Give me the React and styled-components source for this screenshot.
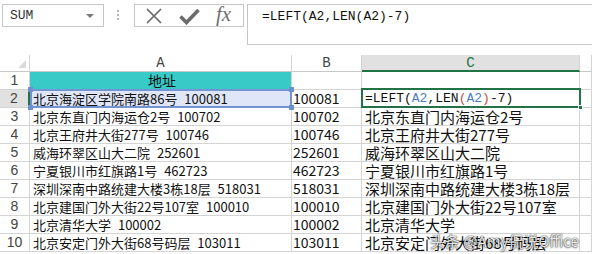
import React from "react";
import styled, { createGlobalStyle } from "styled-components";

const GlobalStyle = createGlobalStyle`
  html, body {
    margin: 0;
    padding: 0;
    background: #fff;
    overflow: hidden;
  }
`;

const rows = [
  ["北京海淀区学院南路86号 100081", "100081", null],
  ["北京东直门内海运仓2号 100702", "100702", "北京东直门内海运仓2号"],
  ["北京王府井大街277号 100746", "100746", "北京王府井大街277号"],
  ["威海环翠区山大二院 252601", "252601", "威海环翠区山大二院"],
  ["宁夏银川市红旗路1号 462723", "462723", "宁夏银川市红旗路1号"],
  ["深圳深南中路统建大楼3栋18层 518031", "518031", "深圳深南中路统建大楼3栋18层"],
  ["北京建国门外大街22号107室 100010", "100010", "北京建国门外大街22号107室"],
  ["北京清华大学 100002", "100002", "北京清华大学"],
  ["北京安定门外大街68号码层 103011", "103011", "北京安定门外大街68号码层"],
];

const App = () => {
  return (
    <Page>
      <GlobalStyle />
      <Toolbar>
        <NameBox>
          SUM
          <Arrow />
        </NameBox>
        <Grip>
          <i />
          <i />
          <i />
        </Grip>
        <ButtonBox>
          <svg width="18" height="18" viewBox="0 0 18 18">
            <path d="M2 2 L16 16 M16 2 L2 16" stroke="#6b6b6b" strokeWidth="1.7" fill="none" />
          </svg>
          <svg width="21" height="18" viewBox="0 0 21 18">
            <path d="M1.5 9.5 L7.5 15.5 L19.5 3" stroke="#6b6b6b" strokeWidth="3.6" fill="none" />
          </svg>
          <Fx>fx</Fx>
        </ButtonBox>
        <FormulaBar>=LEFT(A2,LEN(A2)-7)</FormulaBar>
      </Toolbar>

      <Sheet>
        <Corner />
        <ColHead>A</ColHead>
        <ColHead>B</ColHead>
        <ColHead $selected>C</ColHead>
        <ColHead />

        <RowHead>1</RowHead>
        <Cell $fill="#37cac6" $align="center" $size={14}>
          地址
        </Cell>
        <Cell />
        <Cell />
        <Cell />

        {rows.map(([a, b, c], i) => {
          const n = i + 2;
          return (
            <React.Fragment key={n}>
              <RowHead $selected={n === 2}>{n}</RowHead>
              {n === 2 ? (
                <RefCell>
                  {a}
                  <Handle $top $left />
                  <Handle $top />
                  <Handle $left />
                  <Handle />
                </RefCell>
              ) : (
                <Cell $spaced>{a}</Cell>
              )}
              <Cell $size={14} $pad={1}>
                {b}
              </Cell>
              {c ? (
                <Cell $size={15} $pad={3}>
                  {c}
                </Cell>
              ) : (
                <ActiveCell>
                  =LEFT(<Ref>A2</Ref>,LEN<Paren>(</Paren>
                  <Ref>A2</Ref>
                  <Paren>)</Paren>-7)
                  <FillHandle />
                </ActiveCell>
              )}
              <Cell />
            </React.Fragment>
          );
        })}
        <Watermark>头条 @Amy侃说Office</Watermark>
      </Sheet>
    </Page>
  );
};

export default App;

// Styled components
const Page = styled.div`
  width: 592px;
  height: 254px;
  overflow: hidden;
  padding-top: 4px;
  box-sizing: border-box;
`;

const Toolbar = styled.div`
  display: flex;
  align-items: flex-start;
  height: 41px;
  padding-left: 2px;
`;

const NameBox = styled.div`
  width: 102px;
  height: 23px;
  box-sizing: border-box;
  border: 1px solid #c6c6c6;
  display: flex;
  align-items: center;
  justify-content: space-between;
  padding: 0 7px 0 7px;
  font-family: "Liberation Mono", monospace;
  font-size: 13px;
  color: #333;
`;

const Arrow = styled.span`
  width: 0;
  height: 0;
  border-left: 4px solid transparent;
  border-right: 4px solid transparent;
  border-top: 4px solid #7a7a7a;
  margin-right: 2px;
`;

const Grip = styled.div`
  display: flex;
  flex-direction: column;
  gap: 2px;
  margin: 6px 15px 0 13px;

  i {
    display: block;
    width: 2px;
    height: 2px;
    background: #b5b5b5;
  }
`;

const ButtonBox = styled.div`
  width: 110px;
  height: 23px;
  box-sizing: border-box;
  border: 1px solid #c6c6c6;
  display: flex;
  align-items: center;
  gap: 16px;
  padding-left: 10px;
`;

const Fx = styled.span`
  font-family: "Liberation Serif", serif;
  font-style: italic;
  font-size: 21px;
  line-height: 1;
  color: #707070;
  margin-top: -2px;
`;

const FormulaBar = styled.div`
  flex: 1;
  height: 41px;
  box-sizing: border-box;
  margin-left: 3px;
  border: 1px solid #c6c6c6;
  border-right: none;
  padding: 3px 0 0 14px;
  font-family: "Liberation Mono", monospace;
  font-size: 13px;
  line-height: 18px;
  color: #111;
`;

const Sheet = styled.div`
  position: relative;
  margin-top: 10px;
  display: grid;
  grid-template-columns: 30px 262px 70px 218px 1fr;
  grid-template-rows: 17px repeat(10, 18px);
`;

const Corner = styled.div`
  position: relative;
  border-right: 1px solid #d4d4d4;
  border-bottom: 1px solid #c8c8c8;

  &::after {
    content: "";
    position: absolute;
    right: 3px;
    bottom: 3px;
    width: 0;
    height: 0;
    border-left: 8px solid transparent;
    border-bottom: 8px solid #dadada;
  }
`;

const ColHead = styled.div`
  box-sizing: border-box;
  display: flex;
  align-items: center;
  justify-content: center;
  font-family: "Liberation Mono", monospace;
  font-size: 14px;
  line-height: 16px;
  color: ${(p) => (p.$selected ? "#217346" : "#444")};
  background: ${(p) => (p.$selected ? "#e1e1e1" : "#fff")};
  border-right: 1px solid #d4d4d4;
  border-bottom: ${(p) => (p.$selected ? "2px solid #217346" : "1px solid #c8c8c8")};
`;

const RowHead = styled.div`
  box-sizing: border-box;
  display: flex;
  align-items: center;
  justify-content: center;
  font-family: "Liberation Sans", sans-serif;
  font-size: 14px;
  line-height: 17px;
  color: #444;
  background: ${(p) => (p.$selected ? "#e1e1e1" : "#fff")};
  border-right: ${(p) => (p.$selected ? "2px solid #217346" : "1px solid #d4d4d4")};
  border-bottom: 1px solid #d4d4d4;
`;

const Cell = styled.div`
  box-sizing: border-box;
  display: flex;
  align-items: center;
  justify-content: ${(p) => (p.$align === "center" ? "center" : "flex-start")};
  padding-left: ${(p) => (p.$pad ?? 3)}px;
  white-space: nowrap;
  font-family: "Noto Sans CJK SC", sans-serif;
  font-size: ${(p) => p.$size || 13}px;
  line-height: 17px;
  word-spacing: ${(p) => (p.$spaced ? "4px" : "0")};
  color: #111;
  background: ${(p) => p.$fill || "transparent"};
  border-right: 1px solid #d4d4d4;
  border-bottom: 1px solid #d4d4d4;
`;

const RefCell = styled(Cell).attrs({ $spaced: true })`
  position: relative;
  background: #dfe6f7;

  &::after {
    content: "";
    position: absolute;
    top: -1px;
    left: 0;
    right: -1px;
    bottom: -1px;
    border: 2px solid #7393d3;
    pointer-events: none;
  }
`;

const Handle = styled.span`
  position: absolute;
  z-index: 2;
  width: 5px;
  height: 5px;
  background: #6e8fd0;
  ${(p) => (p.$top ? "top: -3px;" : "bottom: -3px;")}
  ${(p) => (p.$left ? "left: -2px;" : "right: -3px;")}
`;

const ActiveCell = styled.div`
  position: relative;
  display: flex;
  align-items: center;
  padding-left: 3px;
  white-space: nowrap;
  font-family: "Liberation Mono", monospace;
  font-size: 13px;
  line-height: 17px;
  color: #111;
  border-bottom: 1px solid #d4d4d4;

  &::after {
    content: "";
    position: absolute;
    top: -2px;
    left: -1px;
    right: -1px;
    bottom: -1px;
    border: 2px solid #217346;
  }
`;

const FillHandle = styled.span`
  position: absolute;
  z-index: 2;
  right: -3px;
  bottom: -3px;
  width: 5px;
  height: 5px;
  background: #217346;
  border: 1px solid #fff;
  box-sizing: border-box;
`;

const Ref = styled.span`
  color: #4d7ec2;
`;

const Paren = styled.span`
  color: #c0504d;
`;

const Watermark = styled.div`
  position: absolute;
  left: 430px;
  top: 176px;
  font-family: "Noto Sans CJK SC", "Liberation Sans", sans-serif;
  font-size: 15px;
  line-height: 20px;
  color: rgba(255, 255, 255, 0.9);
  text-shadow: 0 0 1px rgba(0, 0, 0, 0.7), 0 0 2px rgba(0, 0, 0, 0.5), 0 1px 2px rgba(0, 0, 0, 0.4);
  white-space: nowrap;
  pointer-events: none;
`;
